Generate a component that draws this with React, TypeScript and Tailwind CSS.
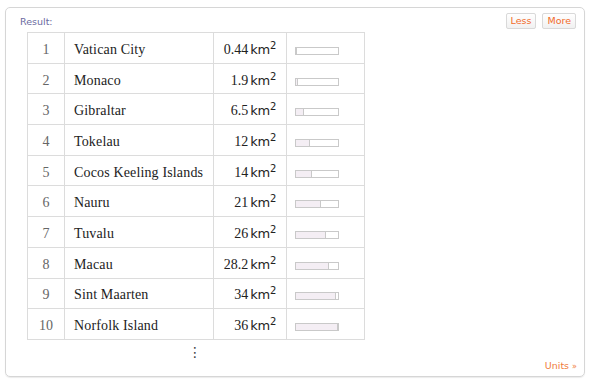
const rows = [
  { n: 1, name: "Vatican City", val: "0.44", v: 0.44 },
  { n: 2, name: "Monaco", val: "1.9", v: 1.9 },
  { n: 3, name: "Gibraltar", val: "6.5", v: 6.5 },
  { n: 4, name: "Tokelau", val: "12", v: 12 },
  { n: 5, name: "Cocos Keeling Islands", val: "14", v: 14 },
  { n: 6, name: "Nauru", val: "21", v: 21 },
  { n: 7, name: "Tuvalu", val: "26", v: 26 },
  { n: 8, name: "Macau", val: "28.2", v: 28.2 },
  { n: 9, name: "Sint Maarten", val: "34", v: 34 },
  { n: 10, name: "Norfolk Island", val: "36", v: 36 },
];

const MAX = 36;

function Bar({ v }: { v: number }) {
  const w = Math.round((v / MAX) * 42);
  return (
    <div className="flex h-[8px] w-[44px] border border-[#c9c9c9] bg-white">
      <div
        className="h-full border-r border-[#c9c9c9] bg-[#f4eef4]"
        style={{ width: Math.max(w, 1) }}
      />
    </div>
  );
}

export default function App() {
  return (
    <div className="h-[382px] w-[590px] bg-white pt-[7px] pl-[5px] [font-family:'DejaVu_Sans',sans-serif]">
      <div className="relative h-[370px] w-[580px] rounded-[5px] border border-[#d6d6d6] shadow-[0_1px_1px_rgba(0,0,0,0.08)]">
        <div className="absolute left-[14px] top-[7px] text-[9.5px] text-[#6a6aa0]">Result:</div>
        <div className="absolute right-[8px] top-[5px] flex gap-[6px]">
          {["Less", "More"].map((t) => (
            <div
              key={t}
              className="rounded-[2px] border border-[#d9d9d9] bg-gradient-to-b from-white to-[#f1f1f1] px-[4px] py-[1px] text-[9.5px] leading-[12px] text-[#f26b2a]"
            >
              {t}
            </div>
          ))}
        </div>

        <div className="pl-[21px] pt-[24px]">
          <table className="border-collapse text-[14px] text-[#222] [font-family:'Liberation_Serif',serif]">
            <tbody>
              {rows.map((r) => (
                <tr key={r.n} className="h-[30.7px]">
                  <td className="w-[37px] border border-[#dcdcdc] pt-[3px] text-center text-[#666]">{r.n}</td>
                  <td className="w-[149px] border border-[#dcdcdc] pt-[3px] pl-[9px] tracking-[0.15px]">{r.name}</td>
                  <td className="w-[73px] border border-[#dcdcdc] pt-[3px] pr-[10px] text-right whitespace-nowrap">
                    {r.val}
                    <span className="ml-[2px] text-[13px] [font-family:'DejaVu_Sans',sans-serif] tracking-[-0.3px]">
                      km<sup className="text-[10px]">2</sup>
                    </span>
                  </td>
                  <td className="w-[78px] border border-[#dcdcdc] pl-[8px]">
                    <div className="pt-[6px]">
                      <Bar v={r.v} />
                    </div>
                  </td>
                </tr>
              ))}
            </tbody>
          </table>
          <div className="ml-[161px] mt-[4px] text-[14px] leading-[16px] text-[#444]">⋮</div>
        </div>

        <div className="absolute bottom-[3px] right-[7px] text-[9.5px] text-[#f07b3c]">
          Units <span className="text-[8px]">»</span>
        </div>
      </div>
    </div>
  );
}
